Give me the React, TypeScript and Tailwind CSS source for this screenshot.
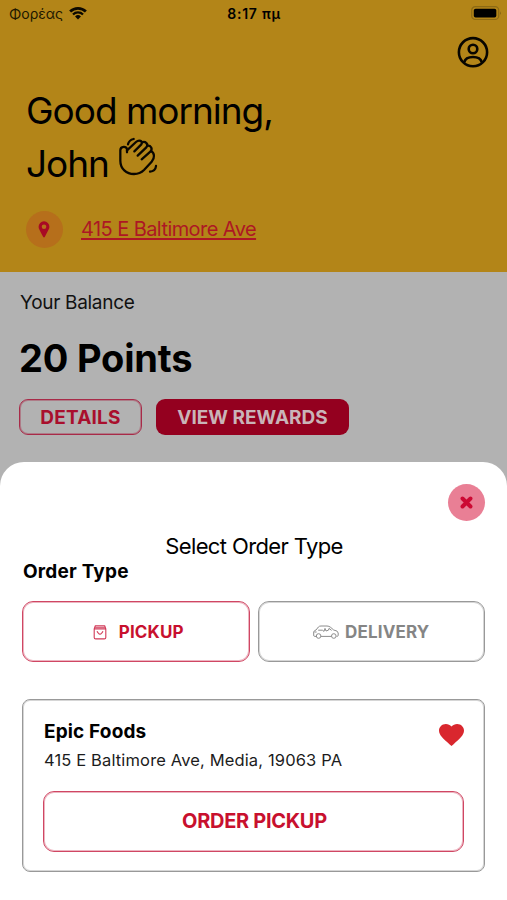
import type { ReactNode } from "react";

function WifiIcon() {
  return (
    <svg className="ml-[6px] h-[15px] w-[18px]" viewBox="0 0 19 15" fill="none" stroke="#0c0900">
      <path d="M1.2 5.4 A11.8 11.8 0 0 1 17.8 5.4" strokeWidth="2.9" />
      <path d="M4.2 8.5 A7.6 7.6 0 0 1 14.8 8.5" strokeWidth="2.4" />
      <path d="M6.4 10.7 A4.4 4.4 0 0 1 12.6 10.7 L9.5 13.9 Z" fill="#0c0900" stroke="none" />
    </svg>
  );
}

function BatteryIcon() {
  return (
    <svg className="h-[15px] w-[31px]" viewBox="0 0 31 15">
      <rect x="0.7" y="0.7" width="27" height="12.8" rx="3.6" fill="none" stroke="#8d6a14" strokeWidth="1.2" />
      <rect x="2.8" y="2.7" width="22.5" height="8.8" rx="1.8" fill="#000" />
      <path d="M29 5.2 Q30.8 7.1 29 9 Z" fill="#7d5e12" />
    </svg>
  );
}

function UserIcon() {
  return (
    <svg className="h-8 w-8" viewBox="0 0 32 32" fill="none" stroke="#080600" strokeWidth="2.6">
      <circle cx="16" cy="16.2" r="14.1" />
      <circle cx="16" cy="13" r="4.3" />
      <path d="M7.2 26.4 C9 19.2 23 19.2 24.8 26.4" />
    </svg>
  );
}

function WaveIcon() {
  return (
    <svg
      className="h-[42px] w-[42px]"
      viewBox="20 15 126 126"
      fill="none"
      stroke="#0a0700"
      strokeWidth="6.8"
      strokeLinecap="round"
      strokeLinejoin="round"
    >
      <path d="M50 67 V59 C50 47 30 48 30 61 V92 C30 116 48 132 71 132 C84 132 93 128 101 120 L124 95 C134 84 133 68 122 63" />
      <path d="M50 61 L77 36 C86 28 99 33 93 43 L72 64" />
      <path d="M95 37 C105 33 116 42 108 52 L82 77" />
      <path d="M111 47 C122 46 128 56 120 65 L94 88" />
      <path d="M53 43 C55 34 61 29 70 27" />
      <path d="M119 125 C130 124 136 118 137 108" />
    </svg>
  );
}

function PinIcon() {
  return (
    <svg className="mr-[2px] h-[17px] w-[12px]" viewBox="0 0 12 17">
      <path
        fillRule="evenodd"
        fill="#a80a24"
        d="M6 .3 A5.4 5.4 0 0 0 .6 5.8 C.6 8.1 2.1 9.8 5.1 15.8 Q6 17 6.9 15.8 C9.9 9.8 11.4 8.1 11.4 5.8 A5.4 5.4 0 0 0 6 .3 Z M6 3.4 A2.3 2.3 0 1 1 6 8 A2.3 2.3 0 1 1 6 3.4 Z"
      />
    </svg>
  );
}

function BagIcon() {
  return (
    <svg className="mt-[1px] h-[15px] w-[14px]" viewBox="0 0 14 15" fill="none" stroke="#d13a58" strokeWidth="1.1" strokeLinejoin="round" strokeLinecap="round">
      <path d="M1.2 3.9 L2.3 .8 H11.7 L12.8 3.9 V12.4 Q12.8 13.9 11.3 13.9 H2.7 Q1.2 13.9 1.2 12.4 Z M1.2 3.9 H12.8 M2 2.3 H12" />
      <path d="M4.2 6.6 L5.4 8.3 Q7 9.9 8.6 8.3 L9.8 6.6" />
    </svg>
  );
}

function CarIcon() {
  return (
    <svg className="h-[14px] w-[26px]" viewBox="0 0 26 14" fill="none" stroke="#8c8c8c" strokeWidth="1" strokeLinejoin="round">
      <path d="M3.3 11.4 H1.6 Q.6 11.4 .7 10 V7 Q.9 5.6 3 5 L5.4 2 Q6.2 1 8 1 H14 Q16 1 17.7 2.4 L20.7 5 Q24.8 5.5 25.2 8 V10.4 Q25.2 11.4 23.6 11.4 M8 11.4 H18.4" />
      <path d="M5.2 5.2 H9.4 L11 6.4 L12 3.4 L13 6 L15.4 5.2 L16 3.4 L18.6 5.4 M1.4 7 H3.6" />
      <circle cx="5.6" cy="11" r="2.3" />
      <circle cx="20.8" cy="11" r="2.3" />
    </svg>
  );
}

function HeartIcon() {
  return (
    <svg className="mt-[4px] h-[22px] w-[25px]" viewBox="2 3 20 18.35" preserveAspectRatio="none" fill="#d9272e">
      <path d="M12 21.35 L10.55 20.03 C5.4 15.36 2 12.28 2 8.5 C2 5.42 4.42 3 7.5 3 C9.24 3 10.91 3.81 12 5.09 C13.09 3.81 14.76 3 16.5 3 C19.58 3 22 5.42 22 8.5 C22 12.28 18.6 15.36 13.45 20.04 Z" />
    </svg>
  );
}

function StatusBar() {
  return (
    <div className="grid h-[26px] grid-cols-3 items-center pl-[9px] pr-[5px]">
      <div className="flex items-center text-[14px] text-[#201800]">
        <span className="w-[54px] whitespace-nowrap">Φορέας</span>
        <WifiIcon />
      </div>
      <span className="whitespace-nowrap pr-[3px] pt-[1px] text-center text-[14px] font-semibold tracking-[0.75px]">8:17 πμ</span>
      <div className="flex justify-end">
        <BatteryIcon />
      </div>
    </div>
  );
}

function OrderTypeButton({ label, icon, active }: { label: string; icon: ReactNode; active?: boolean }) {
  return (
    <button
      className={
        active
          ? "flex h-[61px] items-center justify-center gap-[12px] rounded-[11px] border border-[#d04763] pl-[5px] text-[#c8102e] inset-ring inset-ring-[#d04763]/40"
          : "flex h-[61px] items-center justify-center gap-[6px] rounded-[11px] border border-[#999] text-[#858585] inset-ring inset-ring-[#999]/40"
      }
    >
      {icon}
      <span className="pt-[2px] text-[17px] font-bold tracking-[0.15px]">{label}</span>
    </button>
  );
}

export default function App() {
  return (
    <div className="flex h-[900px] w-[507px] flex-col overflow-hidden bg-[#b2b2b2] font-['Inter',sans-serif] text-black">
      <header className="h-[272px] bg-[#b38518]">
        <StatusBar />
        <div className="flex justify-end pr-[18px] pt-[10px]">
          <UserIcon />
        </div>

        <h1 className="mt-[16px] pl-[26px] text-[37px] leading-[53px] tracking-[-1.02px]">
          <span className="block">Good morning,</span>
          <span className="flex">
            John
            <span className="-mt-[2px] ml-[8px]">
              <WaveIcon />
            </span>
          </span>
        </h1>

        <div className="mt-[21px] flex items-center pl-[26px]">
          <span className="flex h-[37px] w-[37px] items-center justify-center rounded-full bg-[#b66f1b]">
            <PinIcon />
          </span>
          <a
            href="#"
            className="-mt-[2px] ml-[18px] text-[20px] leading-6 tracking-[-0.57px] text-[#ad1724] underline decoration-[1.5px] underline-offset-[2px]"
          >
            415 E Baltimore Ave
          </a>
        </div>
      </header>

      {/* Balance */}
      <section className="h-[190px] pl-[19px] pt-[19px]">
        <p className="pl-[1px] text-[19px] leading-6 tracking-[-0.3px] text-[#111]">Your Balance</p>
        <p className="mt-[19px] text-[38px] font-bold leading-[48px] tracking-[-0.2px]">20 Points</p>
        <div className="mt-[17px] flex gap-[14px]">
          <button className="h-[36px] w-[123px] rounded-[9px] border border-[#a82a48] pt-[2px] text-[19px] font-bold tracking-[0.2px] text-[#a90f2d] inset-ring inset-ring-[#a82a48]/40">
            DETAILS
          </button>
          <button className="h-[36px] w-[193px] rounded-[9px] bg-[#94001f] pt-[2px] text-[19px] font-bold text-[#c9b4b8]">
            VIEW REWARDS
          </button>
        </div>
      </section>

      {/* Order sheet */}
      <section className="flex-1 rounded-t-[24px] bg-white px-[22px] pt-[22px]">
        <div className="flex justify-end">
          <button className="flex h-[37px] w-[37px] items-center justify-center rounded-full bg-[#e97f95]">
            <svg className="h-[13px] w-[13px]" viewBox="0 0 13 13" stroke="#cc0a33" strokeWidth="3.9" strokeLinecap="round">
              <path d="M2.5 2.5 L10.5 10.5 M10.5 2.5 L2.5 10.5" />
            </svg>
          </button>
        </div>
        <h2 className="mt-[12px] pl-[1px] text-center text-[22px] leading-[26px] tracking-[-0.62px]">Select Order Type</h2>
        <h3 className="mt-[1px] pl-[1px] text-[19px] font-bold leading-6 tracking-[0.2px]">Order Type</h3>

        <div className="mt-[17px] grid grid-cols-2 gap-[8px]">
          <OrderTypeButton label="PICKUP" icon={<BagIcon />} active />
          <OrderTypeButton label="DELIVERY" icon={<CarIcon />} />
        </div>

        <div className="mt-[37px] h-[173px] rounded-[8px] border border-[#999] px-[20px] pt-[20px] inset-ring inset-ring-[#999]/40">
          <div className="flex items-start justify-between">
            <div className="pl-[1px]">
              <p className="text-[19px] font-bold leading-6 tracking-[0.15px]">Epic Foods</p>
              <p className="mt-[5px] text-[16.5px] leading-[22px] tracking-[0.14px] text-[#1c1c1c]">415 E Baltimore Ave, Media, 19063 PA</p>
            </div>
            <HeartIcon />
          </div>
          <button className="mt-[20px] h-[61px] w-full rounded-[11px] border border-[#d04763] pb-[1px] pl-[2px] text-[20px] font-bold tracking-[-0.3px] text-[#c8102e] inset-ring inset-ring-[#d04763]/40">
            ORDER PICKUP
          </button>
        </div>
      </section>
    </div>
  );
}
